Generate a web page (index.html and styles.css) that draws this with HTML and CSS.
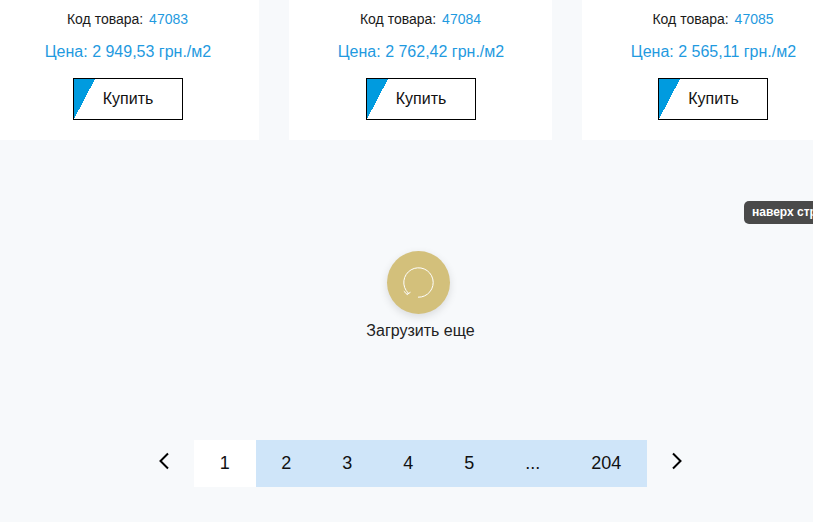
FILE: index.html
```html
<!DOCTYPE html>
<html lang="ru">
<head>
<meta charset="utf-8">
<title>Каталог</title>
<link rel="stylesheet" href="styles.css">
</head>
<body>
<div class="page">
  <div class="cards">
    <div class="card">
      <p class="code">Код товара: <span class="code-num">47083</span></p>
      <p class="price">Цена: 2 949,53 грн./м2</p>
      <a class="buy">Купить</a>
    </div>
    <div class="card">
      <p class="code">Код товара: <span class="code-num">47084</span></p>
      <p class="price">Цена: 2 762,42 грн./м2</p>
      <a class="buy">Купить</a>
    </div>
    <div class="card">
      <p class="code">Код товара: <span class="code-num">47085</span></p>
      <p class="price">Цена: 2 565,11 грн./м2</p>
      <a class="buy">Купить</a>
    </div>
  </div>
  <div class="more">
    <div class="more-btn">
      <svg class="more-icon" viewBox="0 0 32 32" width="32" height="32" fill="none" stroke="#fff" stroke-width="1">
        <path d="M16 30.2 A14.7 14.7 0 1 0 6.3 26.1 L5.2 27.5"/>
        <path d="M1.8 24.2 L5.2 27.5 L8.5 25.2"/>
      </svg>
    </div>
    <div class="more-label">Загрузить еще</div>
  </div>
  <nav class="pager">
    <svg class="arrow" viewBox="0 0 12 18" width="12" height="18" fill="none" stroke="#000" stroke-width="2"><path d="M10 1.5 L2.5 9 L10 16.5"/></svg>
    <div class="pages">
      <a class="pg pg-current">1</a>
      <a class="pg">2</a>
      <a class="pg">3</a>
      <a class="pg">4</a>
      <a class="pg">5</a>
      <a class="pg">...</a>
      <a class="pg">204</a>
    </div>
    <svg class="arrow arrow-next" viewBox="0 0 12 18" width="12" height="18" fill="none" stroke="#000" stroke-width="2"><path d="M2 1.5 L9.5 9 L2 16.5"/></svg>
  </nav>
</div>
<div class="to-top">наверх страницы</div>
</body>
</html>
```
FILE: styles.css
```css
html, body {
  margin: 0;
  height: 522px;
  overflow: hidden;
  background: #f7f9fb;
}
body {
  font-family: "Liberation Sans", Arial, sans-serif;
  color: #1a1a1a;
  position: relative;
}
.page {
  width: 849px;
  margin-left: -4px;
}
.cards {
  display: flex;
  gap: 30px;
}
.card {
  width: 263px;
  height: 140px;
  background: #fff;
  display: flex;
  flex-direction: column;
  align-items: center;
  box-sizing: border-box;
  padding-top: 11px;
}
.card:last-child {
  width: 262px;
}
.code {
  margin: 0;
  font-size: 14px;
  line-height: 16px;
}
.code-num {
  color: #1f9ae0;
  margin-left: 2px;
}
.price {
  margin: 16px 0 0;
  padding-left: 1px;
  font-size: 16px;
  line-height: 18px;
  color: #1f9ae0;
}
.buy {
  margin-top: 17px;
  width: 110px;
  height: 42px;
  box-sizing: border-box;
  border: 1px solid #000;
  background: linear-gradient(to bottom right, #009bdf 0, #009bdf 50%, transparent 50%) no-repeat 0 0 / 21px 40px;
  font-size: 16px;
  line-height: 40px;
  color: #111;
  text-align: center;
  padding-left: 1px;
}
.more {
  display: flex;
  flex-direction: column;
  align-items: center;
  margin-top: 111px;
}
.more-btn {
  width: 63px;
  height: 63px;
  border-radius: 50%;
  background: #d3c07b;
  box-shadow: 0 3px 8px rgba(0, 0, 0, .12);
  display: flex;
  align-items: center;
  justify-content: center;
  margin-left: -5px;
}
.more-label {
  margin-top: 8px;
  font-size: 16px;
  line-height: 18px;
  color: #222;
}
.pager {
  display: flex;
  align-items: center;
  justify-content: center;
  margin-top: 100px;
  gap: 23px;
}
.arrow {
  margin: -5px 1px 0 -1px;
}
.arrow-next {
  margin: -5px -1px 0 1px;
}
.pages {
  display: flex;
  background: #cfe5f9;
  height: 47px;
}
.pg {
  padding: 0 25.5px;
  font-size: 18px;
  line-height: 46px;
  color: #111;
}
.pg-current {
  padding-right: 26px;
  background: #fff;
}
.to-top {
  position: absolute;
  left: 744px;
  top: 201px;
  height: 23px;
  padding: 0 8px;
  box-sizing: border-box;
  white-space: nowrap;
  background: #4a4a4a;
  border-radius: 5px;
  color: #fff;
  font-size: 12px;
  font-weight: bold;
  line-height: 23px;
}
```
